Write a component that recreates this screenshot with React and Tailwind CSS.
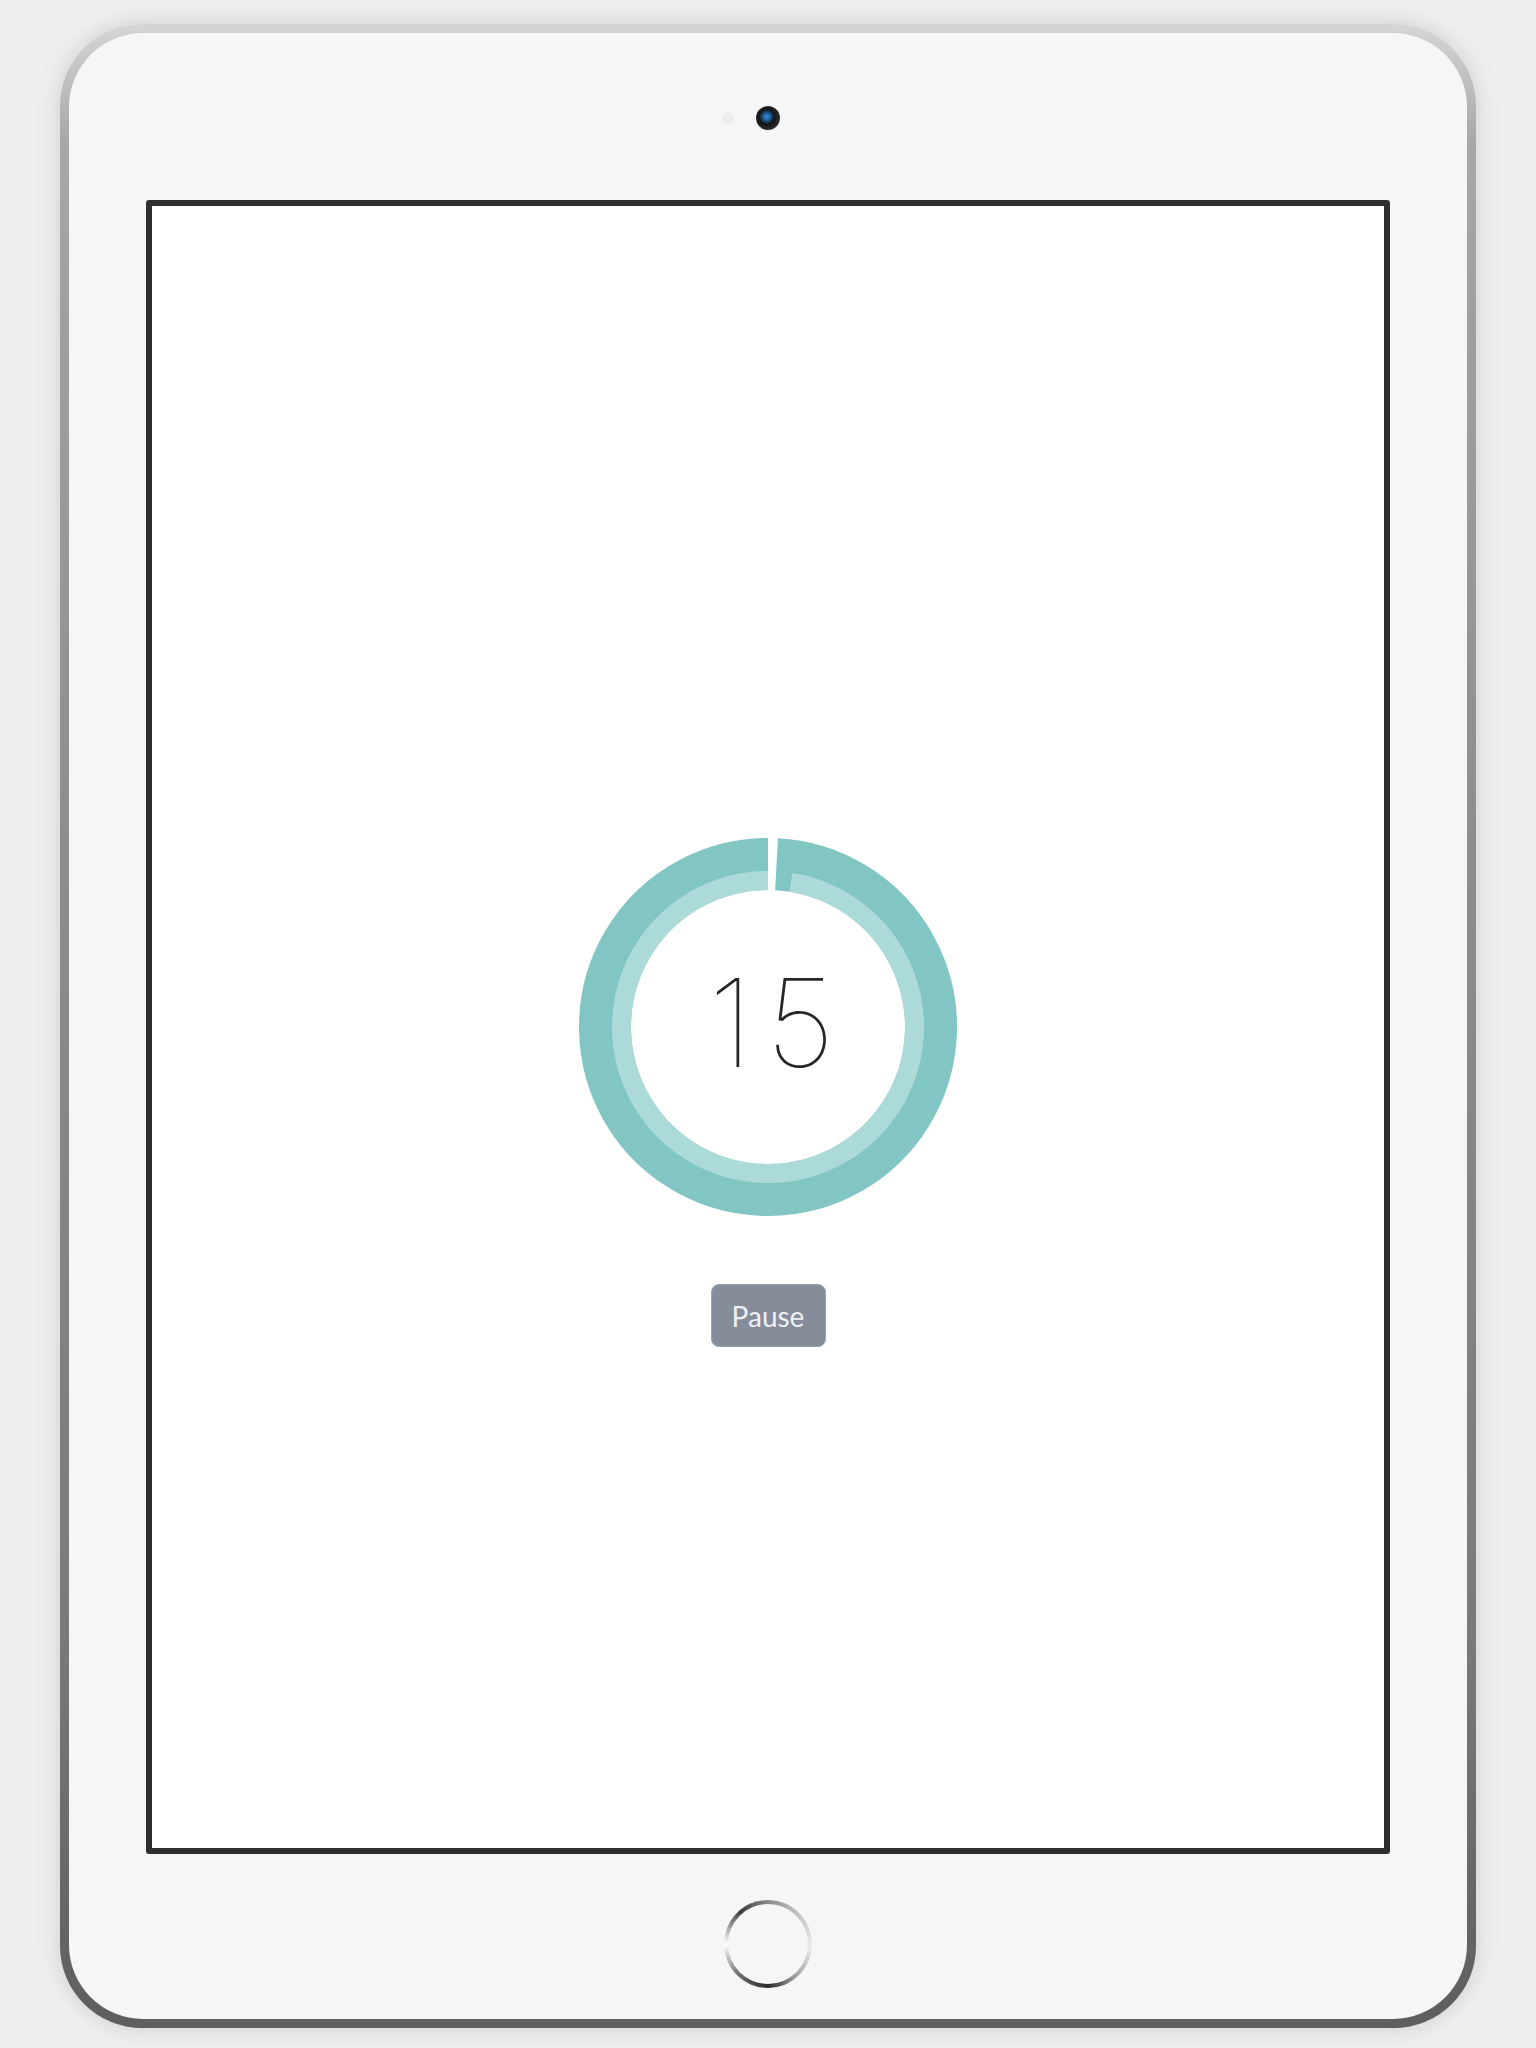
import React from "react";

const CX = 190;
const CY = 190;

// point on a circle, angle in degrees clockwise from 12 o'clock
function pt(r, deg) {
  const a = (deg * Math.PI) / 180;
  return [CX + r * Math.sin(a), CY - r * Math.cos(a)];
}

function arc(r, from, to) {
  const [x1, y1] = pt(r, from);
  const [x2, y2] = pt(r, to);
  const large = to - from > 180 ? 1 : 0;
  return `M ${x1} ${y1} A ${r} ${r} 0 ${large} 1 ${x2} ${y2}`;
}

function TimerRing({ seconds }) {
  return (
    <svg width="380" height="380" viewBox="0 0 380 380">
      <path d={arc(163, 3, 359.99)} fill="none" stroke="#82c6c4" strokeWidth="52" />
      <path d={arc(146.5, 9, 359.99)} fill="none" stroke="#acdad9" strokeWidth="19" />
      <text
        x="200"
        y="230"
        textAnchor="middle"
        fill="#262626"
        fontSize="122"
        fontWeight="100"
        letterSpacing="13"
        style={{ fontFamily: "Inter, Lato, sans-serif" }}
      >
        {seconds}
      </text>
    </svg>
  );
}

export default function App() {
  return (
    <div className="w-[1536px] h-[2048px] bg-[#efefef] pt-[24px] pl-[60px]">
      {/* device frame */}
      <div className="w-[1416px] h-[2004px] rounded-[82px] p-[9px] bg-[linear-gradient(180deg,#d6d6d8_0%,#a6a6a8_6%,#8e8e90_40%,#7a7a7c_80%,#5e5e60_100%)] shadow-[0_0_24px_rgba(0,0,0,0.14)]">
        <div className="w-full h-full rounded-[74px] bg-[#f5f6f8] flex flex-col items-center">
          {/* camera */}
          <div className="h-[167px] flex items-start pt-[73px]">
            <div className="flex items-center gap-[22px] -ml-[34px]">
              <div className="w-[12px] h-[12px] rounded-full bg-[#ececee]" />
              <div className="w-[24px] h-[24px] rounded-full bg-[radial-gradient(circle_at_45%_45%,#3a8fe0_0%,#1c5a9a_20%,#141414_40%,#2e2e2e_70%,#4a4a4a_100%)]" />
            </div>
          </div>

          {/* screen */}
          <div className="w-[1244px] h-[1654px] border-[6px] border-[#303030] rounded-[3px] bg-white flex flex-col items-center pt-[631px]">
            <TimerRing seconds="15" />
            <button className="mt-[67px] w-[115px] h-[63px] rounded-[8px] bg-[#858d9b] border border-[#9ca3ae] text-[#eef0f4] text-[28px] font-['Lato','Open_Sans',sans-serif]">
              Pause
            </button>
          </div>

          {/* home button */}
          <div className="mt-[46px] w-[88px] h-[88px] rounded-full p-[4px] bg-[conic-gradient(from_0deg,#8a8a8c,#c4c4c6_45deg,#ececee_95deg,#a0a0a2_140deg,#2a2a2c_180deg,#707072_225deg,#ffffff_270deg,#3c3c3e_320deg,#8a8a8c)]">
            <div className="w-full h-full rounded-full bg-[#f5f6f8]" />
          </div>
        </div>
      </div>
    </div>
  );
}
